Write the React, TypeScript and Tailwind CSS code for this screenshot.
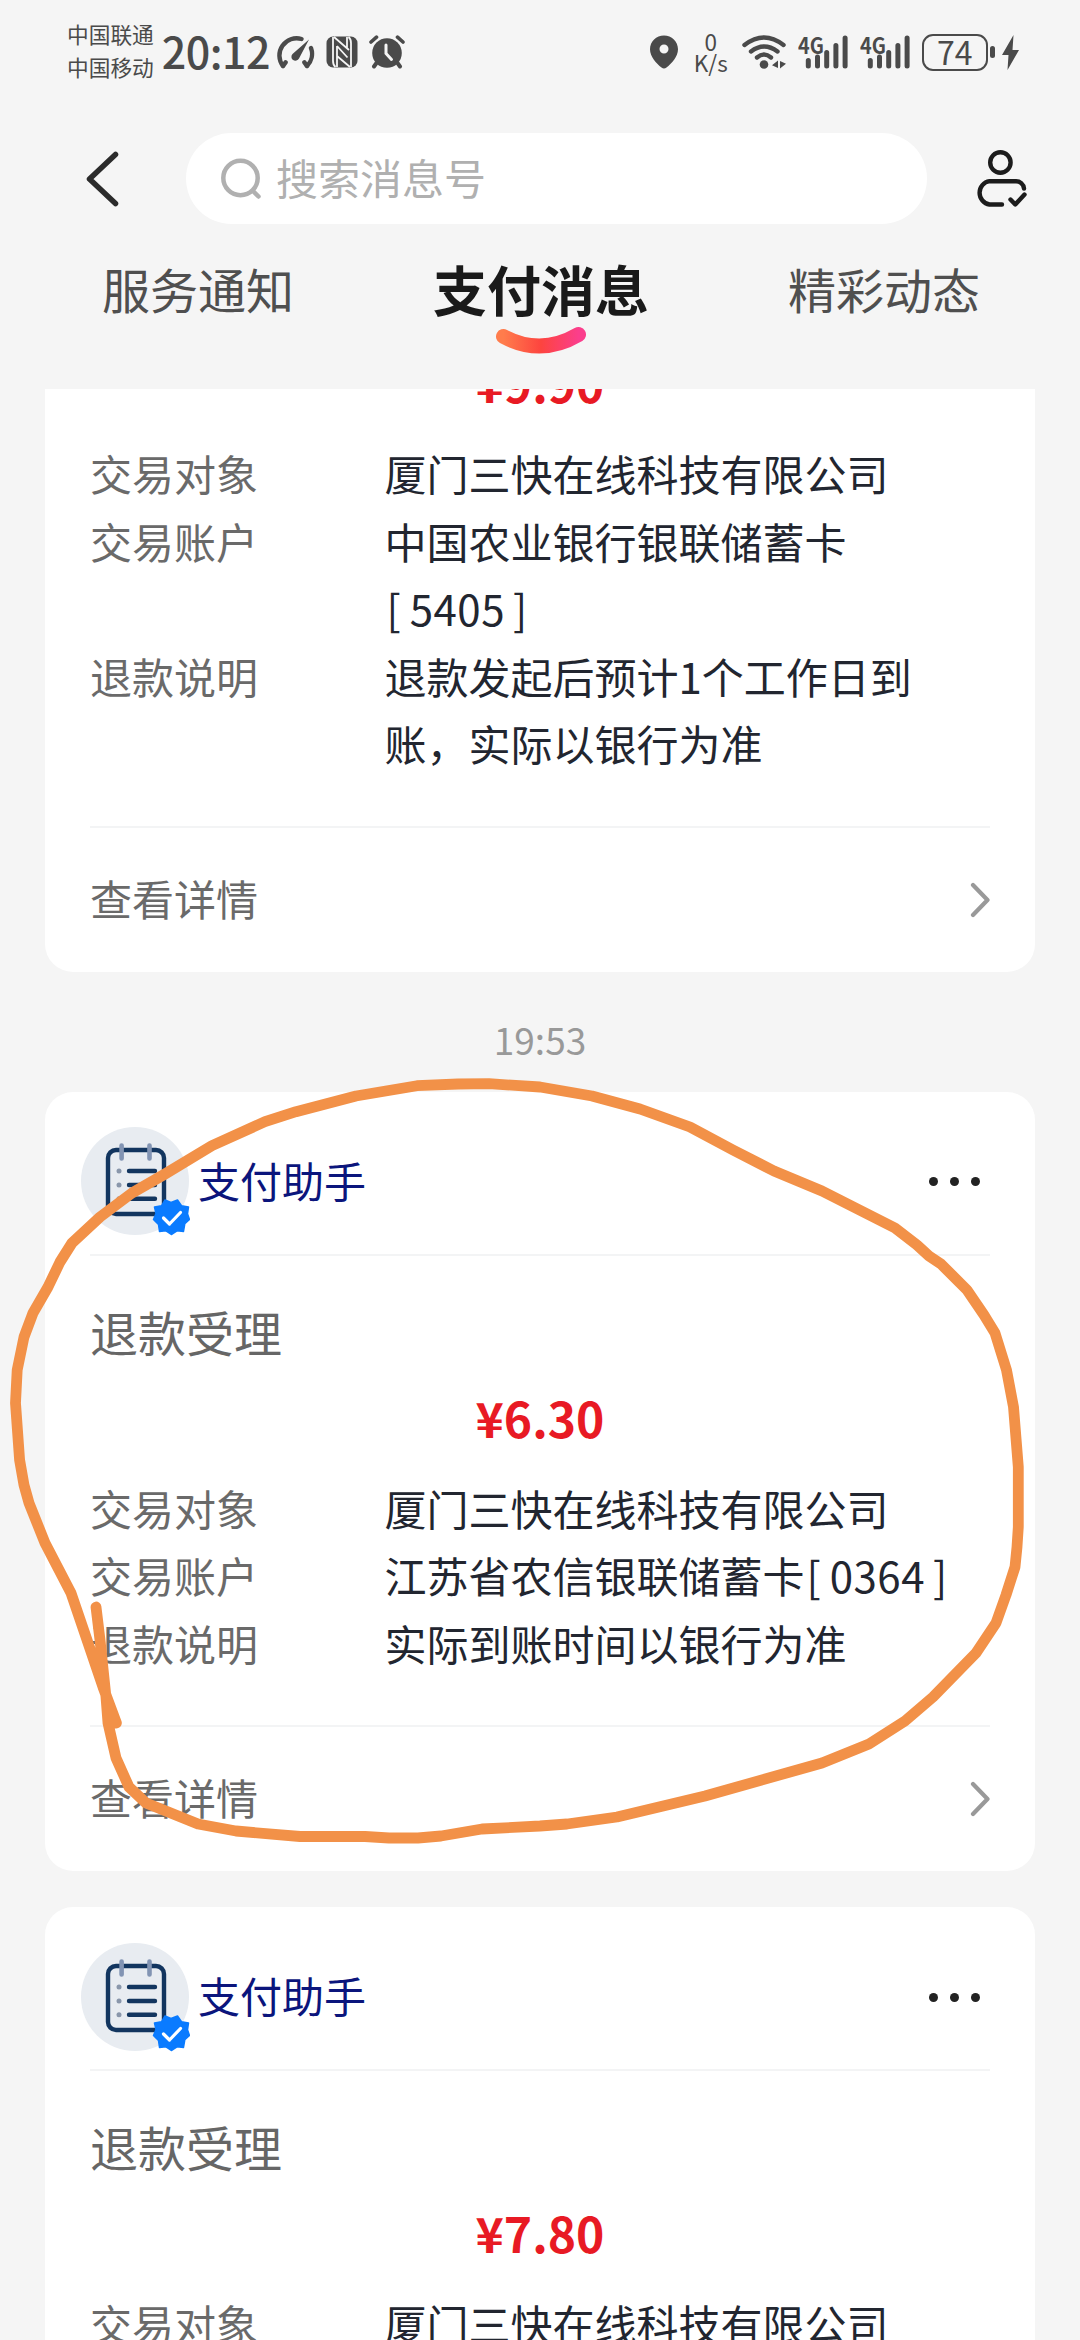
import { clsx } from "clsx";

type Field = { label: string; value: string; account?: string };

type Message = {
  id: number;
  amount: string;
  fields: Field[];
};

const scrolledMessage: Message = {
  id: 1,
  amount: "¥9.90",
  fields: [
    { label: "交易对象", value: "厦门三快在线科技有限公司" },
    { label: "交易账户", value: "中国农业银行银联储蓄卡", account: "5405" },
    { label: "退款说明", value: "退款发起后预计1个工作日到账，实际以银行为准" },
  ],
};

const messages: Message[] = [
  {
    id: 2,
    amount: "¥6.30",
    fields: [
      { label: "交易对象", value: "厦门三快在线科技有限公司" },
      { label: "交易账户", value: "江苏省农信银联储蓄卡", account: "0364" },
      { label: "退款说明", value: "实际到账时间以银行为准" },
    ],
  },
  {
    id: 3,
    amount: "¥7.80",
    fields: [{ label: "交易对象", value: "厦门三快在线科技有限公司" }],
  },
];

const tabs = ["服务通知", "支付消息", "精彩动态"];

function GaugeIcon() {
  return (
    <svg width="40" height="34" viewBox="0 0 40 34" fill="none" stroke="#4a4a4a" strokeWidth="4.4" strokeLinecap="round">
      <path d="M8 31 A17.2 17.2 0 0 1 26.5 4" />
      <path d="M36 13 A17.2 17.2 0 0 1 32 31" />
      <path d="M8 31l2.6-3.6M32 31l-2.6-3.6" />
      <path d="M34 4.500 24 23.500a4 4 0 1 1-6.500-4.500Z" fill="#4a4a4a" stroke="none" />
    </svg>
  );
}

function NfcIcon() {
  return (
    <svg width="32" height="32" viewBox="0 0 32 32">
      <rect x="0.500" y="0.500" width="31" height="31" rx="6.500" fill="#4a4a4a" />
      <path d="M7 1V25Q7 29 9.500 31M25 31V7Q25 3 22.500 1" stroke="#f5f5f5" strokeWidth="1.800" fill="none" />
      <path d="M8 1 23 14M11 10 21.500 21.500M11 10V31M21 1V12M11 20 24 31" stroke="#f5f5f5" strokeWidth="1.800" />
    </svg>
  );
}

function AlarmIcon() {
  return (
    <svg width="36" height="34" viewBox="0 0 36 34" fill="none" strokeLinecap="round">
      <circle cx="18" cy="18" r="14.800" fill="#4a4a4a" />
      <path d="M2 7 7.500 2.200M34 7 28.500 2.200" stroke="#4a4a4a" strokeWidth="3.600" />
      <path d="M7.500 28 5 31.500M28.500 28 31 31.500" stroke="#4a4a4a" strokeWidth="4" />
      <path d="M17 10V18.500L22.500 24.500" stroke="#f5f5f5" strokeWidth="3" />
    </svg>
  );
}

function PinIcon() {
  return (
    <svg width="28" height="34" viewBox="0 0 28 34">
      <path fillRule="evenodd" fill="#4a4a4a" d="M14 0.500C6.300 0.500 0 6.600 0 14.200 0 21.500 6.500 28.500 11.500 32.600Q14 34.600 16.500 32.600C21.500 28.500 28 21.500 28 14.200 28 6.600 21.700 0.500 14 0.500ZM14 9.500a4.500 4.500 0 1 1 0 9 4.500 4.500 0 0 1 0-9Z" />
    </svg>
  );
}

function WifiIcon() {
  return (
    <svg width="45" height="35" viewBox="0 0 45 35" fill="none" stroke="#4a4a4a" strokeWidth="4.400" strokeLinecap="round">
      <path d="M2.500 10Q22 -5 41.500 10" />
      <path d="M9 16.500Q22 6.500 35.500 16.500" />
      <path d="M15 22.500Q22 16.500 29 22.500" />
      <circle cx="22" cy="29.500" r="4.300" fill="#4a4a4a" stroke="none" />
      <path d="M36 25.500V33L30 30.200ZM38 33.500V26L44 28.800Z" fill="#4a4a4a" stroke="none" />
    </svg>
  );
}

function Signal() {
  return (
    <div className="relative h-[34px] w-[51px]">
      <span className="absolute -top-0.5 left-0 origin-left scale-x-[0.9] text-[22px] leading-[22px] font-bold">4G</span>
      <svg className="absolute top-0 left-0" width="51" height="34" viewBox="0 0 51 34" stroke="#4a4a4a" strokeWidth="5" strokeLinecap="round">
        <path d="M10.300 25.500V31M19.500 22V31M28.700 17.500V31M37.900 10.500V31M47.100 3V31" />
      </svg>
    </div>
  );
}

function Battery() {
  return (
    <div className="flex items-center">
      <div className="flex h-[37px] w-[66px] items-center justify-center rounded-[11px] border-[2.500px] border-[#4a4a4a]">
        <span className="-mt-0.5 text-[32px] leading-[32px]">74</span>
      </div>
      <div className="ml-0.5 h-3 w-[5px] rounded-full bg-[#4a4a4a]" />
      <svg className="ml-[7px]" width="17" height="35" viewBox="0 0 17 35">
        <path d="M11.500 0 0 20H6.500L5.500 35 17 15H10.500Z" fill="#4a4a4a" />
      </svg>
    </div>
  );
}

function StatusBar() {
  return (
    <div className="flex h-[104px] items-center pl-[67px] text-[#4a4a4a]">
      <div className="-mt-1 text-[21.700px] leading-[33px]">
        <p>中国联通</p>
        <p>中国移动</p>
      </div>
      <span className="-mt-1 ml-2 w-[113px] text-[43px] leading-[44px] font-medium tracking-[-0.5px] whitespace-nowrap">20:12</span>
      <div className="flex items-center">
        <GaugeIcon />
        <div className="ml-[11px]">
          <NfcIcon />
        </div>
        <div className="ml-[11px]">
          <AlarmIcon />
        </div>
      </div>
      <div className="ml-[245px] flex items-center">
        <PinIcon />
        <div className="ml-[15px] w-9 text-center text-[22.500px] leading-[21px]">
          <p>0</p>
          <p>K/s</p>
        </div>
        <div className="ml-[13px] flex items-center gap-[11px]">
          <WifiIcon />
          <Signal />
          <Signal />
          <Battery />
        </div>
      </div>
    </div>
  );
}

function SearchHeader() {
  return (
    <div className="mt-[29px] flex h-[91px] items-center pl-[86px]">
      <svg width="33" height="56" viewBox="0 0 33 56" fill="none" stroke="#2b2b2b" strokeWidth="5.500" strokeLinecap="round" strokeLinejoin="round">
        <path d="M29.500 3.500 3.500 28 29.500 52.500" />
      </svg>
      <div className="ml-[67px] flex h-full w-[741px] items-center rounded-full bg-white pl-[35px] text-[#b0b0b0]">
        <svg width="41" height="42" viewBox="0 0 41 42" fill="none" stroke="#b0b0b0" strokeWidth="4.500" strokeLinecap="round">
          <circle cx="19.500" cy="20" r="17.200" />
          <path d="M32.500 33.500 37.500 38.500" />
        </svg>
        <span className="-mt-1 ml-[14px] text-[42px] leading-[60px]">搜索消息号</span>
      </div>
      <svg className="ml-[47px]" width="54" height="60" viewBox="0 0 54 60" fill="none" stroke="#1c1c1c" strokeWidth="4.400" strokeLinecap="round" strokeLinejoin="round">
        <circle cx="26.400" cy="13.500" r="10.200" />
        <path d="M28 55.500H15.500A11.800 11.800 0 0 1 15.500 32.200H41.500A8 8 0 0 1 50 39.500" />
        <path d="M36.500 50.500 41.300 55.500 50.500 45.500" />
      </svg>
    </div>
  );
}

function Tabs() {
  return (
    <div className="flex h-[165px] items-start justify-between pt-8 pr-[100px] pl-[102px]">
      {tabs.map((tab, index) => (
        <div key={tab} className="flex flex-col items-center">
          <span className={clsx("leading-[64px]", index === 1 ? "mt-px text-[54px] font-bold text-[#1a1a1a]" : "text-[48px] text-[#4f4f4f]")}>{tab}</span>
          {index === 1 && (
            <svg className="mt-[5px]" width="92" height="30" viewBox="0 0 92 30" fill="none">
              <defs>
                <linearGradient id="smile" x1="0" y1="0" x2="1" y2="0">
                  <stop offset="0" stopColor="#ff7c4c" />
                  <stop offset="0.500" stopColor="#fd443f" />
                  <stop offset="1" stopColor="#fb3e8c" />
                </linearGradient>
              </defs>
              <path d="M8.500 10.500Q46 30.500 83.500 8.500" stroke="url(#smile)" strokeWidth="15" strokeLinecap="round" />
            </svg>
          )}
        </div>
      ))}
    </div>
  );
}

function Avatar() {
  return (
    <svg width="109" height="109" viewBox="0 0 109 109" fill="none" strokeLinecap="round">
      <circle cx="54" cy="54" r="54" fill="#e8ecf1" />
      <rect x="27" y="23" width="56" height="64" rx="8" stroke="#12355f" strokeWidth="4.400" />
      <path d="M40.600 18.500V31.500M68.500 18.500V31.500" stroke="#8294b3" strokeWidth="4.600" />
      <path d="M48 44H74M48 58H74M48 71.700H74" stroke="#12355f" strokeWidth="4.400" />
      <g fill="#8a97ab">
        <circle cx="38" cy="44" r="2.500" />
        <circle cx="38" cy="58" r="2.500" />
        <circle cx="38" cy="71.700" r="2.500" />
      </g>
      <path
        d="M90 75.500 96.500 73 100.500 78.800 107.500 80 106.500 86.800 108.500 92.500 103.800 96.800 102.500 104.500 96 103.800 90.300 107.500 85 103.800 78.500 104.500 77.500 97.500 72.500 92.500 75 86.500 73.500 80 80.500 78.800 84 73Z"
        fill="#0a7bff"
        stroke="#0a7bff"
        strokeWidth="1.500"
        strokeLinejoin="round"
      />
      <path d="M82.500 91 88.500 97 99.500 85.500" stroke="#fff" strokeWidth="3.200" strokeLinejoin="round" />
    </svg>
  );
}

function CardHeader() {
  return (
    <div className="flex h-[164px] items-center border-b-2 border-[#f3f4f5] pt-[18px]">
      <div className="-ml-[9px]">
        <Avatar />
      </div>
      <span className="-mt-1 ml-[8px] text-[42px] leading-[60px] text-[#0b157c]">支付助手</span>
      <div className="mr-[10px] ml-auto flex gap-3">
        <i className="size-[9px] rounded-full bg-[#222]" />
        <i className="size-[9px] rounded-full bg-[#222]" />
        <i className="size-[9px] rounded-full bg-[#222]" />
      </div>
    </div>
  );
}

function FieldRow({ label, value, account }: Field) {
  return (
    <div className="flex text-[42px] leading-[67.500px]">
      <span className="w-[294.500px] shrink-0 text-[#6a6a6a]">{label}</span>
      <p className="w-[566px] text-[#222630]">
        {value}
        {account && (
          <span className="inline-block whitespace-nowrap">
            <span className="mr-[9px] ml-[2px]">[</span>
            <span className="tracking-[0.5px]">{account}</span>
            <span className="ml-[8px]">]</span>
          </span>
        )}
      </p>
    </div>
  );
}

function CardFooter() {
  return (
    <div className="mt-[49px] flex h-[146px] items-center justify-between border-t-2 border-[#f3f4f5]">
      <span className="-mt-1 text-[42px] leading-[60px] text-[#6a6a6a]">查看详情</span>
      <svg width="20" height="36" viewBox="0 0 20 36" fill="none" stroke="#999" strokeWidth="4.200" strokeLinecap="round" strokeLinejoin="round">
        <path d="M3 3 17.500 18 3 33" />
      </svg>
    </div>
  );
}

function Amount({ children }: { children: string }) {
  return <p className="text-center text-[48px] leading-[60px] font-bold text-[#e81a24]">{children}</p>;
}

function MessageCard({ message }: { message: Message }) {
  return (
    <section className="rounded-[28px] bg-white px-[45px]">
      <CardHeader />
      <h2 className="mt-[45px] text-[48px] leading-[60px] text-[#666]">退款受理</h2>
      <div className="mt-[26px] mb-[27px]">
        <Amount>{message.amount}</Amount>
      </div>
      {message.fields.map((field) => (
        <FieldRow key={field.label} {...field} />
      ))}
      <CardFooter />
    </section>
  );
}

// Hand-drawn pen mark over the second message
function PenMark() {
  return (
    <svg className="pointer-events-none absolute top-0 left-0" width="1080" height="2340" viewBox="0 0 1080 2340" fill="none">
      <path
        d="M96 1607 100 1640 106 1697 108 1723 116 1758 129 1787 146 1803 198 1824 236 1831 300 1836.500 365 1836.500 389 1838 418 1838 441 1836 482 1829 540 1826 567 1824 617 1817 705 1796 822 1763 869 1744 905 1721 933 1697 976 1653 996 1623 1006 1595 1015 1567 1017 1547 1018.300 1527 1018.300 1467 1013.500 1407 1006.500 1370 995 1333 984 1315 967 1290 941 1264 929 1256 917 1245 895 1228 822 1191 774 1171 733 1150 690 1127 640 1109 592 1096 540 1087 489 1083.700 458 1084 417 1085.700 356 1096 296 1111.700 265 1121.700 212 1145.700 165 1174 132 1193 100 1217 72 1243 60 1262 48 1287 33 1313 24 1337 17.200 1370 15.500 1403 19.600 1460 24 1485 29 1503 45 1543 71 1593 86 1637 103 1687 116.400 1723"
        stroke="#f29148"
        strokeWidth="10.800"
        strokeLinecap="round"
        strokeLinejoin="round"
      />
    </svg>
  );
}

export default function App() {
  return (
    <div lang="zh-CN" className="relative flex h-[2340px] w-[1080px] flex-col overflow-hidden bg-[#f5f5f5] font-['Noto_Sans_CJK_SC',sans-serif]">
      <StatusBar />
      <SearchHeader />
      <Tabs />
      <main className="min-h-0 flex-1 overflow-hidden px-[45px]">
        <section className="rounded-b-[28px] bg-white px-[45px]">
          <div className="-mt-[37px] mb-[27px]">
            <Amount>{scrolledMessage.amount}</Amount>
          </div>
          {scrolledMessage.fields.map((field) => (
            <FieldRow key={field.label} {...field} />
          ))}
          <CardFooter />
        </section>
        <p className="h-[120px] pt-[38px] text-center text-[37px] leading-[58px] text-[#999]">19:53</p>
        <div className="flex flex-col gap-9">
          {messages.map((message) => (
            <MessageCard key={message.id} message={message} />
          ))}
        </div>
      </main>
      <PenMark />
    </div>
  );
}
